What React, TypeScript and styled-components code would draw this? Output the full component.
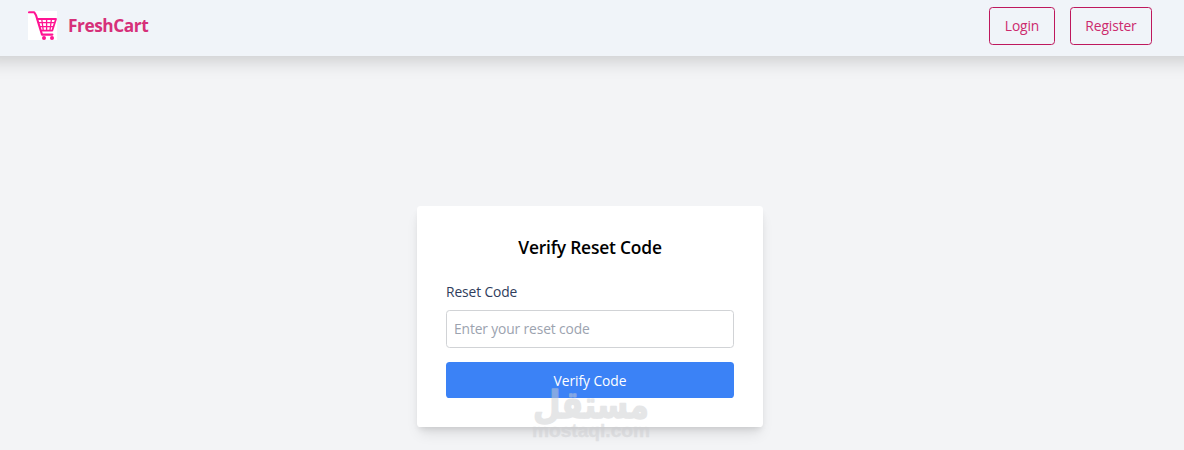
import React from 'react';
import styled, { createGlobalStyle } from 'styled-components';

const GlobalStyle = createGlobalStyle`
  *, *::before, *::after { box-sizing: border-box; }
  html, body { margin: 0; padding: 0; }
  body {
    background: #f3f4f6;
    font-family: "Open Sans", "Noto Sans", sans-serif;
    overflow: hidden;
  }
`;

const Page = styled.div`
  position: relative;
  height: 450px;
  display: flex;
  flex-direction: column;
  overflow: hidden;
`;

const Navbar = styled.header`
  height: 56px;
  flex: none;
  display: flex;
  align-items: flex-start;
  justify-content: space-between;
  padding: 7px 32px 0 28px;
  background: #f0f4f9;
  box-shadow: 0 -16px 18px 20px rgba(0, 0, 0, 0.18);
`;

const Brand = styled.a`
  display: flex;
  align-items: center;
  gap: 11px;
  height: 37px;
  color: #d63079;
`;

const CartIcon = styled.svg`
  width: 29px;
  height: 29px;
  background: #fff;
`;

const BrandName = styled.span`
  font-size: 17.3px;
  font-weight: 700;
  letter-spacing: -0.45px;
`;

const Actions = styled.nav`
  display: flex;
  gap: 15px;
`;

const OutlineButton = styled.button<{ $width: number }>`
  width: ${(p) => p.$width}px;
  height: 38px;
  padding: 0;
  border: 1px solid #be185d;
  border-radius: 3.6px;
  background: transparent;
  color: #cc2a6d;
  font: 400 13.8px/20px "Open Sans", sans-serif;
  letter-spacing: -0.1px;
`;

const Main = styled.main`
  flex: 1;
  display: flex;
  justify-content: center;
  align-items: flex-start;
  padding: 150px 4px 0 0;
`;

const Card = styled.form`
  width: 346px;
  height: 221px;
  display: flex;
  flex-direction: column;
  padding: 29px;
  border-radius: 3.6px;
  background: #fff;
  box-shadow: 0 9px 14px -3px rgba(0, 0, 0, 0.1), 0 4px 6px -2px rgba(0, 0, 0, 0.1);
`;

const Title = styled.h2`
  margin: 0 0 21px;
  font-size: 17.4px;
  line-height: 25px;
  font-weight: 600;
  letter-spacing: -0.2px;
  text-align: center;
  color: #000;
`;

const Label = styled.label`
  height: 21px;
  margin-bottom: 8px;
  font-size: 13.8px;
  line-height: 21px;
  letter-spacing: -0.1px;
  color: #2f3d5c;
`;

const CodeInput = styled.input`
  height: 38px;
  flex: none;
  padding: 0 7px 2px;
  border: 1px solid #d1d3d6;
  border-radius: 3.6px;
  background: #fff;
  font: 400 13.8px "Open Sans", sans-serif;
  letter-spacing: -0.12px;
  outline: none;
  &::placeholder { color: #9ca3af; opacity: 1; }
`;

const SubmitButton = styled.button`
  height: 36px;
  flex: none;
  margin-top: 14px;
  padding: 2px 0 0;
  border: 0;
  border-radius: 3.6px;
  background: #3b82f6;
  color: #fff;
  font: 400 13.8px/20px "Open Sans", sans-serif;
  letter-spacing: -0.05px;
`;

const Watermark = styled.svg`
  position: absolute;
  left: 526px;
  top: 380px;
  width: 130px;
  height: 70px;
  overflow: visible;
  opacity: 0.5;
  pointer-events: none;
`;

export default function App() {
  return (
    <Page>
      <GlobalStyle />
      <Navbar>
        <Brand>
          <CartIcon viewBox="0 0 29 29" fill="none" stroke="#ff1493" strokeLinecap="round" strokeLinejoin="round">
            <path d="M1 1.3H6.2L8 4.2L14 23.6H24.4" strokeWidth="2.1" />
            <path d="M9.5 8H28L24.3 19.6H13" strokeWidth="1.8" />
            <path d="M10.5 11.7H26.5M12 15.7H25M13.8 8.5L15.2 19M18.6 8.5V19M23.4 8.5L22 19" strokeWidth="1.3" />
            <circle cx="16" cy="26.9" r="2" fill="#ff1493" stroke="none" />
            <circle cx="24" cy="26.9" r="2" fill="#ff1493" stroke="none" />
          </CartIcon>
          <BrandName>FreshCart</BrandName>
        </Brand>
        <Actions>
          <OutlineButton type="button" $width={66}>Login</OutlineButton>
          <OutlineButton type="button" $width={82}>Register</OutlineButton>
        </Actions>
      </Navbar>
      <Main>
        <Card>
          <Title>Verify Reset Code</Title>
          <Label htmlFor="reset-code">Reset Code</Label>
          <CodeInput id="reset-code" placeholder="Enter your reset code" />
          <SubmitButton type="button">Verify Code</SubmitButton>
        </Card>
      </Main>
      <Watermark viewBox="0 0 130 70" fill="#cdced1" stroke="#cdced1" strokeLinejoin="round">
        <text x="65" y="38" textAnchor="middle" direction="rtl" fontFamily="DejaVu Sans, sans-serif" fontWeight="700" fontSize="38" strokeWidth="1.4" textLength="116" lengthAdjust="spacingAndGlyphs">مستقل</text>
        <text x="6" y="57" fontFamily="Liberation Sans, sans-serif" fontWeight="700" fontSize="19" strokeWidth="0.3" textLength="118" lengthAdjust="spacingAndGlyphs">mostaql.com</text>
      </Watermark>
    </Page>
  );
}
